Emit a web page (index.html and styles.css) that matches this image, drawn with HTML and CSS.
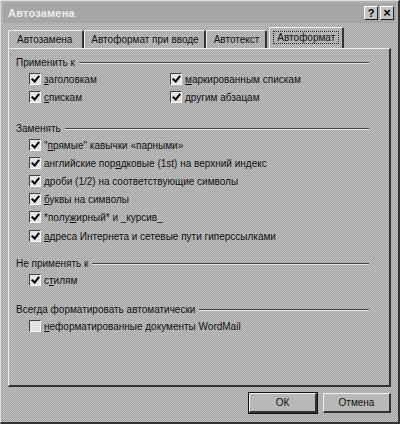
FILE: index.html
```html
<!DOCTYPE html>
<html lang="ru">

<head>
    <meta charset="UTF-8">
    <title>Автозамена</title>
    <link rel="stylesheet" href="styles.css">
</head>

<body>
    <div class="dialog">
        <div class="titlebar">
            <span class="title">Автозамена</span>
            <div class="caption-buttons">
                <span class="caption-btn">?</span>
                <span class="caption-btn close">×</span>
            </div>
        </div>

        <div class="tabs">
            <div class="tab t1">Автозамена</div>
            <div class="tab t2">Автоформат при вводе</div>
            <div class="tab t3">Автотекст</div>
            <div class="tab t4 active"><span class="focus">Автоформат</span></div>
        </div>

        <div class="panel">
            <div class="group">
                <div class="group-head"><span>Применить к</span><i class="rule"></i></div>
                <div class="options two-col">
                    <label class="opt"><span class="box checked"></span><span><u>з</u>аголовкам</span></label>
                    <label class="opt"><span class="box checked"></span><span><u>м</u>аркированным спискам</span></label>
                    <label class="opt"><span class="box checked"></span><span><u>с</u>пискам</span></label>
                    <label class="opt"><span class="box checked"></span><span><u>д</u>ругим абзацам</span></label>
                </div>
            </div>

            <div class="group g-replace">
                <div class="group-head"><span>Заменять</span><i class="rule"></i></div>
                <div class="options">
                    <label class="opt"><span class="box checked"></span><span>"<u>п</u>рямые" кавычки «парными»</span></label>
                    <label class="opt"><span class="box checked"></span><span>английские пор<u>я</u>дковые (1st) на верхний индекс</span></label>
                    <label class="opt"><span class="box checked"></span><span><u>д</u>роби (1/2) на соответствующие символы</span></label>
                    <label class="opt"><span class="box checked"></span><span><u>б</u>уквы на символы</span></label>
                    <label class="opt"><span class="box checked"></span><span>*полу<u>ж</u>ирный* и _курсив_</span></label>
                    <label class="opt last"><span class="box checked"></span><span><u>а</u>дреса Интернета и сетевые пути гиперссылками</span></label>
                </div>
            </div>

            <div class="group g-skip">
                <div class="group-head"><span>Не применять к</span><i class="rule"></i></div>
                <div class="options">
                    <label class="opt"><span class="box checked"></span><span>с<u>т</u>илям</span></label>
                </div>
            </div>

            <div class="group g-always">
                <div class="group-head"><span>Всегда форматировать автоматически</span><i class="rule"></i></div>
                <div class="options">
                    <label class="opt"><span class="box"></span><span><u>н</u>еформатированные документы WordMail</span></label>
                </div>
            </div>
        </div>

        <div class="footer">
            <button type="button" class="btn default">ОК</button>
            <button type="button" class="btn">Отмена</button>
        </div>
    </div>
</body>

</html>
```

FILE: styles.css
```css
body {
    margin: 0;
    padding: 0;
    background: #b0b0b0;
    font-family: 'Liberation Sans', Arial, sans-serif;
    font-size: 10px;
    color: #111111;
}

.dialog {
    width: 400px;
    height: 424px;
    box-sizing: border-box;
    border-top: 1px solid #dddddd;
    border-left: 1px solid #dddddd;
    border-right: 2px solid #333333;
    border-bottom: 2px solid #333333;
    background-color: #b2b2b2;
    background-image: repeating-conic-gradient(#a4a4a4 0 25%, #c0c0c0 0 50%);
    background-size: 2px 2px;
    display: flex;
    flex-direction: column;
}

.titlebar {
    height: 20px;
    margin: 2px 2px 0 2px;
    padding: 0 2px 0 5px;
    display: flex;
    align-items: center;
    justify-content: space-between;
    background: #a6a6a6;
}

.title {
    color: #eeeeee;
    font-weight: bold;
    font-size: 11px;
    letter-spacing: 0.2px;
}

.caption-buttons {
    display: flex;
    gap: 2px;
}

.caption-btn {
    width: 14px;
    height: 14px;
    box-sizing: border-box;
    border-top: 1px solid #ffffff;
    border-left: 1px solid #ffffff;
    border-right: 1px solid #222222;
    border-bottom: 1px solid #222222;
    background: #c4c4c4;
    font-weight: bold;
    font-size: 11px;
    line-height: 12px;
    text-align: center;
    color: #000000;
}

.caption-btn.close {
    font-size: 13px;
}

.tabs {
    display: flex;
    align-items: flex-end;
    margin-top: 4px;
    padding-left: 7px;
    height: 21px;
}

.tab {
    height: 18px;
    line-height: 17px;
    padding: 0 8px;
    box-sizing: border-box;
    border-top: 1px solid #eeeeee;
    border-left: 1px solid #eeeeee;
    border-right: 2px solid #333333;
    border-radius: 2px 2px 0 0;
    white-space: nowrap;
}

.tab.t1 {
    padding: 0 10px 0 8px;
}

.tab.t2 {
    padding: 0 5px 0 6px;
}

.tab.t3 {
    padding: 0 6px 0 7px;
}

.tab.active {
    height: 21px;
    line-height: 19px;
    margin-left: 2px;
    padding: 0 3px;
}

.focus {
    border: 1px dotted #222222;
    padding: 0 3px;
}

.panel {
    height: 339px;
    margin: 0 7px 0 7px;
    box-sizing: border-box;
    border-top: 1px solid #eeeeee;
    border-left: 1px solid #eeeeee;
    border-right: 2px solid #333333;
    border-bottom: 2px solid #333333;
    padding: 4px 20px 0 7px;
}

.group-head {
    display: flex;
    align-items: center;
    gap: 4px;
    height: 18px;
}

.rule {
    flex: 1;
    height: 0;
    border-top: 1px solid #444444;
    border-bottom: 1px solid #e6e6e6;
    margin-top: 2px;
}

.options {
    padding-left: 13px;
    margin-top: -1px;
}

.two-col {
    display: grid;
    grid-template-columns: 141px auto;
}

.opt {
    display: flex;
    align-items: center;
    gap: 3px;
    height: 18px;
    white-space: nowrap;
}

.opt.last {
    margin-top: 1px;
}

.box {
    width: 12px;
    height: 12px;
    box-sizing: border-box;
    border-top: 1px solid #444444;
    border-left: 1px solid #444444;
    border-right: 1px solid #f4f4f4;
    border-bottom: 1px solid #f4f4f4;
    background: #e4e4e4;
    position: relative;
}

.box.checked::after {
    content: "";
    position: absolute;
    left: 3px;
    top: 0px;
    width: 3px;
    height: 6px;
    border-right: 2px solid #000000;
    border-bottom: 2px solid #000000;
    transform: rotate(40deg);
}

u {
    text-decoration: underline;
    text-underline-offset: 1px;
}

.g-replace {
    margin-top: 13px;
}

.g-skip {
    margin-top: 9px;
}

.g-always {
    margin-top: 11px;
}

.footer {
    display: flex;
    justify-content: flex-end;
    gap: 6px;
    margin-top: 6px;
    padding-right: 7px;
}

.btn {
    width: 68px;
    height: 20px;
    padding: 0;
    box-sizing: border-box;
    font-family: 'Liberation Sans', Arial, sans-serif;
    font-size: 10px;
    color: #111111;
    background: #b8b8b8;
    border-top: 1px solid #f0f0f0;
    border-left: 1px solid #f0f0f0;
    border-right: 2px solid #333333;
    border-bottom: 2px solid #333333;
}

.btn.default {
    outline: 1px solid #111111;
}
```
